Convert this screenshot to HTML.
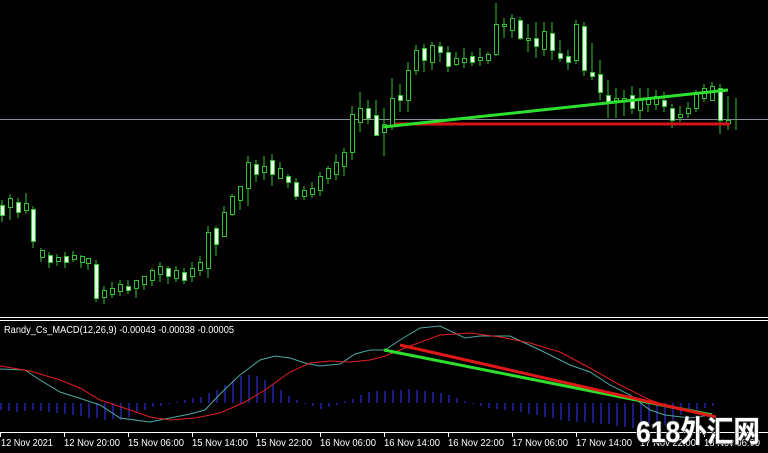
<!DOCTYPE html>
<html><head><style>
html,body{margin:0;padding:0;background:#000;width:768px;height:453px;overflow:hidden}
svg{display:block}
text{font-family:"Liberation Sans","Noto Sans CJK SC",sans-serif}
</style></head><body>
<svg width="768" height="453" viewBox="0 0 768 453">
<rect width="768" height="453" fill="#000"/>
<line x1="0" y1="119.5" x2="768" y2="119.5" stroke="#8a8a9a" stroke-width="1"/>
<g stroke="#33c233" stroke-width="1" fill="none">
<path d="M2,200V222M10,194V220M18,198V218M26,193V214M33,206V248M41,248V262M49,252V268M57,254V266M65,252V268M73,251V262M81,255V268M88,258V270M96,260V302M104,286V304M112,282V298M120,280V296M128,280V294M136,282V298M144,276V290M152,268V286M160,262V282M168,266V284M176,266V282M184,268V284M192,262V282M200,256V276M208,226V278M216,226V256M224,206V236M232,194V216M240,192V210M248,156V206M256,160V182M264,156V180M272,154V186M280,162V178M288,174V188M296,178V200M304,186V200M312,182V198M320,172V196M328,166V184M336,154V180M344,148V176M352,106V160M360,92V132M368,100V124M376,100V136M384,108V156M392,78V130M400,84V112M408,62V112M416,45V75M424,44V72M432,42V70M440,42V62M448,46V72M456,52V66M464,48V68M472,52V66M480,48V66M488,52V64M496,3V56M504,18V38M512,14V38M520,17V40M528,24V52M536,22V58M544,22V56M552,22V60M560,40V62M568,50V70M576,20V64M584,22V76M592,43V80M600,60V100M608,80V118M616,88V118M624,90V116M632,86V114M640,88V120M648,88V112M656,90V110M664,92V112M672,104V128M680,106V122M688,102V118M696,90V112M704,84V102M712,82V100M720,84V134M728,96V130M736,98V130"/>
</g>
<g stroke="#33c233" stroke-width="1">
<path fill="#000" d="M8.5,198.5h4v9h-4zM24.5,203.5h4v7h-4zM40.5,250.5h4v7h-4zM56.5,257.5h4v4h-4zM72.5,255.5h4v4h-4zM80.5,256.5h4v6h-4zM86.5,258.5h4v5h-4zM102.5,290.5h4v7h-4zM110.5,288.5h4v6h-4zM118.5,284.5h4v7h-4zM134.5,280.5h4v8h-4zM142.5,276.5h4v8h-4zM150.5,270.5h4v10h-4zM158.5,266.5h4v8h-4zM174.5,270.5h4v8h-4zM190.5,268.5h4v8h-4zM198.5,262.5h4v8h-4zM206.5,232.5h4v36h-4zM222.5,212.5h4v24h-4zM230.5,196.5h4v18h-4zM238.5,186.5h4v14h-4zM246.5,162.5h4v26h-4zM262.5,166.5h4v6h-4zM278.5,168.5h4v10h-4zM302.5,190.5h4v6h-4zM310.5,188.5h4v6h-4zM318.5,176.5h4v14h-4zM326.5,168.5h4v10h-4zM334.5,162.5h4v12h-4zM342.5,152.5h4v14h-4zM350.5,114.5h4v38h-4zM358.5,108.5h4v14h-4zM382.5,124.5h4v8h-4zM390.5,98.5h4v27h-4zM406.5,70.5h4v30h-4zM414.5,50.5h4v20h-4zM430.5,45.5h4v17h-4zM454.5,58.5h4v6h-4zM462.5,58.5h4v4h-4zM478.5,57.5h4v3h-4zM486.5,54.5h4v6h-4zM494.5,24.5h4v30h-4zM502.5,24.5h4v2h-4zM510.5,18.5h4v12h-4zM526.5,38.5h4v2h-4zM542.5,31.5h4v18h-4zM574.5,24.5h4v36h-4zM614.5,98.5h4v2h-4zM622.5,98.5h4v3h-4zM638.5,100.5h4v10h-4zM646.5,98.5h4v6h-4zM654.5,96.5h4v8h-4zM678.5,114.5h4v3h-4zM686.5,108.5h4v5h-4zM694.5,94.5h4v14h-4zM702.5,88.5h4v10h-4zM710.5,86.5h4v14h-4zM726.5,120.5h4v3h-4z"/>
<path fill="#e6ffe6" d="M0.5,205.5h4v10h-4zM16.5,202.5h4v10h-4zM31.5,209.5h4v32h-4zM48.5,255.5h4v7h-4zM64.5,256.5h4v6h-4zM94.5,264.5h4v34h-4zM126.5,286.5h4v4h-4zM166.5,268.5h4v8h-4zM182.5,272.5h4v8h-4zM214.5,228.5h4v16h-4zM254.5,164.5h4v10h-4zM270.5,160.5h4v14h-4zM286.5,176.5h4v6h-4zM294.5,182.5h4v14h-4zM366.5,108.5h4v10h-4zM374.5,115.5h4v20h-4zM398.5,95.5h4v5h-4zM422.5,48.5h4v12h-4zM438.5,46.5h4v6h-4zM446.5,52.5h4v14h-4zM470.5,56.5h4v6h-4zM518.5,20.5h4v18h-4zM534.5,38.5h4v8h-4zM550.5,33.5h4v17h-4zM558.5,53.5h4v5h-4zM566.5,56.5h4v6h-4zM582.5,26.5h4v44h-4zM590.5,72.5h4v4h-4zM598.5,74.5h4v18h-4zM606.5,95.5h4v7h-4zM630.5,95.5h4v13h-4zM662.5,100.5h4v6h-4zM670.5,108.5h4v12h-4zM718.5,88.5h4v32h-4z"/>
</g>
<line x1="395" y1="124" x2="730" y2="124" stroke="#d41515" stroke-width="3"/>
<line x1="383" y1="127" x2="728" y2="90" stroke="#2ee02e" stroke-width="3"/>
<rect x="0" y="317" width="768" height="1" fill="#fff"/>
<rect x="0" y="320" width="768" height="1" fill="#fff"/>
<text x="4" y="333" fill="#fff" font-size="10.5" textLength="230" lengthAdjust="spacingAndGlyphs">Randy_Cs_MACD(12,26,9) -0.00043 -0.00038 -0.00005</text>
<g stroke="#2c2cd8" stroke-width="1.2">
<path d="M1,403V410M9,403V411M17,403V412M25,403V411M33,403V410M41,403V411M49,403V412M57,403V413M65,403V414M73,403V415M81,403V416M89,403V418M97,403V418M105,403V420M113,403V419M121,403V420M129,403V417M137,403V412M145,403V410M153,403V407M161,403V406M169,403V404M177,403V402M185,403V400M193,403V398M201,403V397M209,403V393M217,403V390M225,403V385M233,403V380M241,403V376M249,403V375M257,403V376M265,403V380M273,403V384M281,403V390M289,403V396M297,403V400M305,403V404M313,403V406M321,403V409M329,403V407M337,403V405M345,403V401M353,403V399M361,403V395M369,403V392M377,403V391M385,403V391M393,403V390M401,403V390M409,403V389M417,403V390M425,403V391M433,403V392M441,403V393M449,403V395M457,403V398M465,403V401M473,403V404M481,403V406M489,403V408M497,403V409M505,403V410M513,403V411M521,403V412M529,403V414M537,403V415M545,403V417M553,403V418M561,403V420M569,403V421M577,403V422M585,403V422M593,403V423M601,403V424M609,403V424M617,403V426M625,403V427M633,403V428M641,403V428M649,403V427M657,403V426M665,403V425M673,403V420M681,403V415M689,403V412M697,403V410M705,403V408M713,403V406"/>
</g>
<polyline fill="none" stroke="#4fa8a0" stroke-width="1" points="0,369 25,370 40,380 60,392 85,400 100,405 120,418 150,422 170,418 190,414 205,410 220,394 240,375 260,360 275,356 290,358 305,363 320,366 340,364 355,354 370,350 385,350 400,340 420,328 440,326 465,338 480,336 510,336 540,350 570,365 590,372 610,385 630,395 650,410 665,415 690,418 710,415"/>
<polyline fill="none" stroke="#e02020" stroke-width="1" points="0,366 30,371 60,380 80,388 100,400 130,410 150,417 170,420 195,418 220,413 245,402 265,390 290,372 310,363 330,361 350,362 370,360 385,356 410,346 440,335 470,333 500,337 530,343 560,352 590,368 620,385 650,400 680,410 710,414"/>
<line x1="384" y1="350" x2="712" y2="415" stroke="#2ee02e" stroke-width="3"/>
<line x1="400" y1="345" x2="716" y2="417" stroke="#e01818" stroke-width="3"/>
<rect x="0" y="432" width="768" height="1" fill="#fff"/>
<g stroke="#fff"><path d="M0.5,432V437M64.5,432V437M128.5,432V437M192.5,432V437M256.5,432V437M320.5,432V437M384.5,432V437M448.5,432V437M512.5,432V437M576.5,432V437M640.5,432V437M704.5,432V437"/></g>
<g fill="#fff" font-size="10">
<text x="1" y="446" textLength="52" lengthAdjust="spacingAndGlyphs">12 Nov 2021</text>
<text x="64" y="446" textLength="56" lengthAdjust="spacingAndGlyphs">12 Nov 20:00</text>
<text x="128" y="446" textLength="56" lengthAdjust="spacingAndGlyphs">15 Nov 06:00</text>
<text x="192" y="446" textLength="56" lengthAdjust="spacingAndGlyphs">15 Nov 14:00</text>
<text x="256" y="446" textLength="56" lengthAdjust="spacingAndGlyphs">15 Nov 22:00</text>
<text x="320" y="446" textLength="56" lengthAdjust="spacingAndGlyphs">16 Nov 06:00</text>
<text x="384" y="446" textLength="56" lengthAdjust="spacingAndGlyphs">16 Nov 14:00</text>
<text x="448" y="446" textLength="56" lengthAdjust="spacingAndGlyphs">16 Nov 22:00</text>
<text x="512" y="446" textLength="56" lengthAdjust="spacingAndGlyphs">17 Nov 06:00</text>
<text x="576" y="446" textLength="56" lengthAdjust="spacingAndGlyphs">17 Nov 14:00</text>
<text x="640" y="446" textLength="56" lengthAdjust="spacingAndGlyphs">17 Nov 22:00</text>
<text x="704" y="446" textLength="56" lengthAdjust="spacingAndGlyphs">18 Nov 06:00</text>
</g>
<text x="636" y="442" fill="#fff" stroke="#333" stroke-width="1.5" paint-order="stroke" font-size="30" font-weight="bold" textLength="124" lengthAdjust="spacingAndGlyphs">618外汇网</text>
</svg>
</body></html>
